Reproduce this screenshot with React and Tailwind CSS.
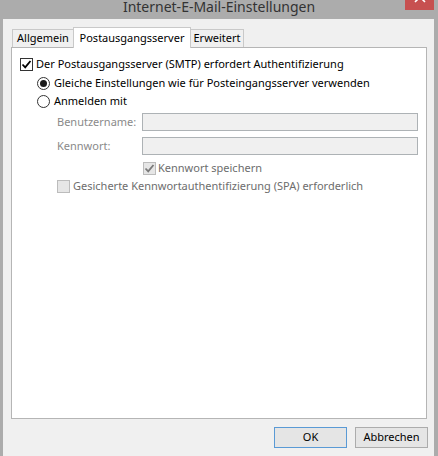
import React from 'react'

const font = { fontFamily: '"Noto Sans", "Open Sans", "DejaVu Sans", sans-serif' }

function Check({ checked, disabled }) {
  const box = disabled ? 'bg-[#e6e6e6] border-[#bcbcbc]' : 'bg-white border-[#333333]'
  return (
    <span className={`w-[13px] h-[13px] shrink-0 border flex items-center justify-center ${box}`}>
      {checked && (
        <svg width="11" height="11" viewBox="0 0 11 11">
          <path d="M1.5 5.5 L4.2 8.3 L9.5 2" fill="none" stroke={disabled ? '#7a7a7a' : '#000000'} strokeWidth="1.8" />
        </svg>
      )}
    </span>
  )
}

function Radio({ selected }) {
  return (
    <span className="w-[13px] h-[13px] shrink-0 rounded-full border border-[#333333] bg-white flex items-center justify-center">
      {selected && <span className="w-[7px] h-[7px] rounded-full bg-[#1a1a1a]" />}
    </span>
  )
}

export default function App() {
  return (
    <div className="w-[438px] h-[456px] overflow-hidden bg-[#acacac] flex flex-col text-[11px] text-black" style={font}>
      <div className="relative h-[19px] shrink-0 flex justify-center">
        <span className="text-[14px] leading-[14px] mt-0 text-[#333333]">Internet-E-Mail-Einstellungen</span>
        <div className="absolute right-[4px] top-0 w-[29px] h-[10px] bg-[#c75050] overflow-hidden flex justify-center">
          <svg width="14" height="10" viewBox="0 0 14 10" className="shrink-0">
            <path d="M2 -8 L12 2 M12 -8 L2 2" stroke="#ffffff" strokeWidth="1.6" fill="none" />
          </svg>
        </div>
      </div>

      <div className="flex-1 ml-[3px] mr-[4px] bg-[#f0f0f0] pl-[8px] pr-[7px] pt-[8px] flex flex-col">
        <div className="h-[20px] flex items-end relative z-10">
          <div className="ml-[1px] w-[61px] h-[18px] border-l border-t border-[#c9c9c9] bg-[#f0f0f0] flex items-center justify-center">
            Allgemein
          </div>
          <div className="w-[118px] h-[21px] -mb-px border-l border-t border-r border-[#c9c9c9] bg-white flex items-start justify-center pt-[2px]">
            Postausgangsserver
          </div>
          <div className="w-[53px] h-[18px] border-t border-r border-[#c9c9c9] bg-[#f0f0f0] flex items-center justify-center">
            Erweitert
          </div>
        </div>

        <div className="h-[372px] shrink-0 border border-[#b5b5b5] bg-white pl-[8px] flex flex-col">
          <div className="mt-[7px] h-[18px] flex items-center gap-[3px]">
            <Check checked />
            <span>Der Postausgangsserver (SMTP) erfordert Authentifizierung</span>
          </div>
          <div className="mt-[1px] ml-[17px] h-[18px] flex items-center gap-[4px]">
            <Radio selected />
            <span>Gleiche Einstellungen wie für Posteingangsserver verwenden</span>
          </div>
          <div className="ml-[17px] h-[18px] flex items-center gap-[4px]">
            <Radio />
            <span>Anmelden mit</span>
          </div>
          <div className="mt-[3px] ml-[37px] h-[18px] flex items-center">
            <span className="w-[85px] text-[#8a8a8a]">Benutzername:</span>
            <span className="w-[276px] h-[18px] border border-[#adb2b5] bg-[#f0f0f0]" />
          </div>
          <div className="mt-[6px] ml-[37px] h-[18px] flex items-center">
            <span className="w-[85px] text-[#8a8a8a]">Kennwort:</span>
            <span className="w-[276px] h-[18px] border border-[#adb2b5] bg-[#f0f0f0]" />
          </div>
          <div className="mt-[4px] ml-[123px] h-[18px] flex items-center gap-[2px]">
            <Check checked disabled />
            <span className="text-[#6d6d6d]">Kennwort speichern</span>
          </div>
          <div className="ml-[37px] h-[18px] flex items-center gap-[3px]">
            <Check disabled />
            <span className="text-[#6d6d6d]">Gesicherte Kennwortauthentifizierung (SPA) erforderlich</span>
          </div>
        </div>

        <div className="mt-[8px] flex justify-end gap-[8px] -mr-px">
          <button type="button" className="w-[73px] h-[21px] border border-[#5a9ad5] bg-[#e5e5e5] flex items-center justify-center">
            OK
          </button>
          <button type="button" className="w-[73px] h-[21px] border border-[#acacac] bg-[#e5e5e5] flex items-center justify-center">
            Abbrechen
          </button>
        </div>
      </div>
    </div>
  )
}
